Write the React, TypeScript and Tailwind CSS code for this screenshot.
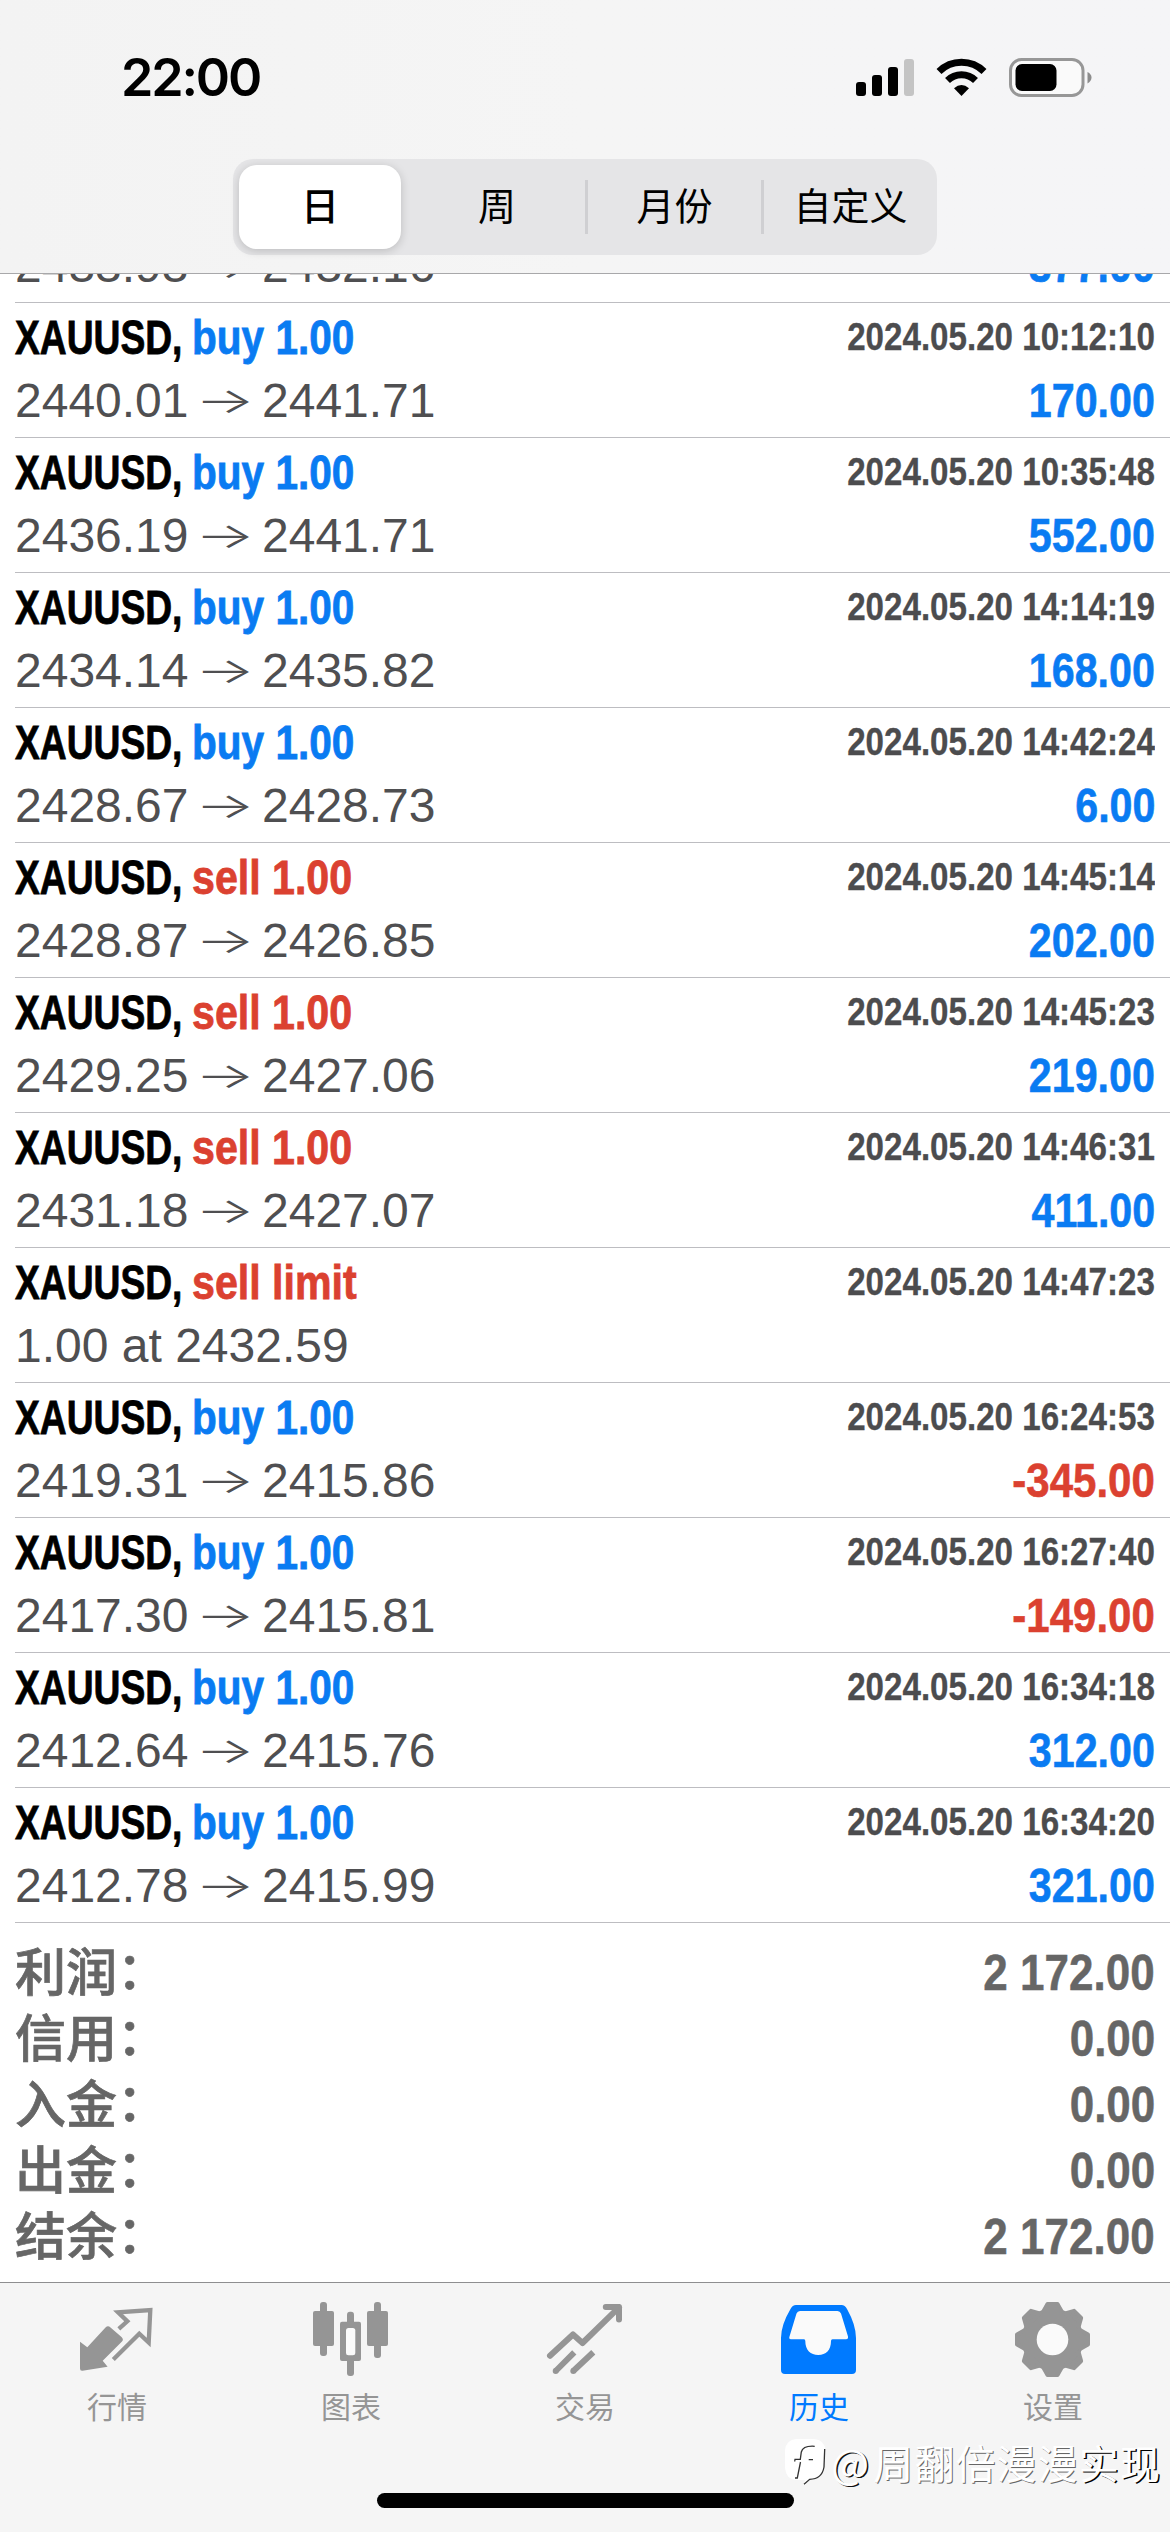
import type { ReactNode } from 'react';
import clsx from 'clsx';

type Side = 'buy' | 'sell';

interface Deal {
  side: Side;
  action: string;
  time: string;
  open?: string;
  close?: string;
  note?: string;
  profit?: string;
}

const DEALS: Deal[] = [
  { side: 'buy', action: 'buy 1.00', time: '2024.05.20 10:12:10', open: '2440.01', close: '2441.71', profit: '170.00' },
  { side: 'buy', action: 'buy 1.00', time: '2024.05.20 10:35:48', open: '2436.19', close: '2441.71', profit: '552.00' },
  { side: 'buy', action: 'buy 1.00', time: '2024.05.20 14:14:19', open: '2434.14', close: '2435.82', profit: '168.00' },
  { side: 'buy', action: 'buy 1.00', time: '2024.05.20 14:42:24', open: '2428.67', close: '2428.73', profit: '6.00' },
  { side: 'sell', action: 'sell 1.00', time: '2024.05.20 14:45:14', open: '2428.87', close: '2426.85', profit: '202.00' },
  { side: 'sell', action: 'sell 1.00', time: '2024.05.20 14:45:23', open: '2429.25', close: '2427.06', profit: '219.00' },
  { side: 'sell', action: 'sell 1.00', time: '2024.05.20 14:46:31', open: '2431.18', close: '2427.07', profit: '411.00' },
  { side: 'sell', action: 'sell limit', time: '2024.05.20 14:47:23', note: '1.00 at 2432.59' },
  { side: 'buy', action: 'buy 1.00', time: '2024.05.20 16:24:53', open: '2419.31', close: '2415.86', profit: '-345.00' },
  { side: 'buy', action: 'buy 1.00', time: '2024.05.20 16:27:40', open: '2417.30', close: '2415.81', profit: '-149.00' },
  { side: 'buy', action: 'buy 1.00', time: '2024.05.20 16:34:18', open: '2412.64', close: '2415.76', profit: '312.00' },
  { side: 'buy', action: 'buy 1.00', time: '2024.05.20 16:34:20', open: '2412.78', close: '2415.99', profit: '321.00' },
];

const SUMMARY = [
  { label: '利润', value: '2 172.00' },
  { label: '信用', value: '0.00' },
  { label: '入金', value: '0.00' },
  { label: '出金', value: '0.00' },
  { label: '结余', value: '2 172.00' },
];

const PERIODS = ['日', '周', '月份', '自定义'];

function QuotesIcon() {
  return (
    <svg viewBox="0 0 80 80" className="size-20">
      <path
        d="M3 41.7 10.3 47.3 28.500 27.5Q31 25 33.500 27.500L44.500 37Q47 39.500 45 41.500L25.700 60.700 30.600 66.700 5.500 70.700Q3 71 3 68.500Z"
        fill="currentColor"
      />
      <path
        d="M41.800 28.800 50.300 21.300 41 12.300 73.300 10 71.700 42.500 62.300 33.700 36.300 59.500"
        fill="none"
        stroke="currentColor"
        strokeWidth="4.300"
      />
    </svg>
  );
}

function ChartIcon() {
  return (
    <svg viewBox="0 0 80 80" className="size-20" fill="currentColor">
      <rect x="9" y="2" width="7" height="54" rx="3" />
      <rect x="2" y="11" width="21" height="35" rx="2" />
      <rect x="63" y="2" width="7" height="56" rx="3" />
      <rect x="56" y="11" width="21" height="35" rx="2" />
      <rect x="36" y="11.700" width="7" height="64.300" rx="3" />
      <rect x="29" y="21.700" width="21" height="39.300" rx="2" />
      <rect x="35" y="28" width="9.300" height="27.300" rx="2.500" fill="#fafafa" />
    </svg>
  );
}

function TradeIcon() {
  return (
    <svg viewBox="0 0 80 80" className="size-20" fill="none" stroke="currentColor" strokeWidth="6">
      <path d="M5 55.700 28 34.500 37.500 43 74 7.300M60.800 7H74V19.500" strokeLinecap="round" strokeLinejoin="round" />
      <path d="M10.700 71 29.300 52.300M28.300 71 48.300 52.300" />
      <g fill="currentColor" stroke="none">
        <circle cx="10.700" cy="71" r="3" />
        <circle cx="28.300" cy="71" r="3" />
      </g>
    </svg>
  );
}

function HistoryIcon() {
  return (
    <svg viewBox="0 0 80 80" className="size-20">
      <path
        d="M17 5H62.500Q66 5 68 9Q77 25 77 38V70Q77 74 73 74H6Q2 74 2 70V38Q2 25 11.500 9Q13.500 5 17 5Z"
        fill="currentColor"
      />
      <path
        d="M21 11H58.500Q61 11 62 13.500L69 36.500Q69.500 39.300 67 39.300H53.500Q52 39.300 52 41C52 50 47 55 39.300 55S26.300 50 26.300 41Q26.300 39.300 25 39.300H12Q9.500 39.300 10.500 36.500L17.500 13.500Q18.500 11 21 11Z"
        fill="#fafafa"
      />
    </svg>
  );
}

function SettingsIcon() {
  const teeth = [0, 45, 90, 135, 180, 225, 270, 315];
  return (
    <svg viewBox="0 0 80 80" className="size-20" fill="currentColor">
      <circle cx="39.500" cy="39.500" r="31" />
      {teeth.map((deg) => (
        <path
          key={deg}
          d="M30 12 34.500 4H44.500L49 12Z"
          stroke="currentColor"
          strokeWidth="4"
          strokeLinejoin="round"
          transform={`rotate(${deg} 39.500 39.500)`}
        />
      ))}
      <circle cx="39.500" cy="39.500" r="15.800" fill="#fafafa" />
    </svg>
  );
}

const TABS: { label: string; icon: ReactNode; active?: boolean }[] = [
  { label: '行情', icon: <QuotesIcon /> },
  { label: '图表', icon: <ChartIcon /> },
  { label: '交易', icon: <TradeIcon /> },
  { label: '历史', icon: <HistoryIcon />, active: true },
  { label: '设置', icon: <SettingsIcon /> },
];

function StatusBar() {
  return (
    <div className="flex h-[159px] justify-between pl-[121px] pr-[78px] pt-[46px]">
      <span className="h-[64px] font-['Inter'] text-[52px] font-semibold leading-[64px] tracking-[-2.2px] text-black">
        22:00
      </span>
      <svg viewBox="0 0 236 40" className="mt-[12px] h-10 w-[236px]">
        <rect x="0" y="24" width="10" height="14" rx="3" />
        <rect x="16" y="17" width="10" height="21" rx="3" />
        <rect x="32" y="9" width="10" height="29" rx="3" />
        <rect x="48" y="1" width="10" height="37" rx="3" fill="#c4c4c4" />
        <g fill="none" stroke="#000" strokeWidth="7">
          <path d="M83 13.500A32 32 0 0 1 128 13.500" />
          <path d="M91.500 22.500A20 20 0 0 1 119.500 22.500" />
        </g>
        <path d="M105.500 38 98 30.300Q105.500 23.500 113 30.300Z" />
        <rect x="154.500" y="1.500" width="72.500" height="36" rx="11" fill="#fafafa" stroke="#979797" strokeWidth="3" />
        <rect x="159.500" y="6" width="41" height="27" rx="6.500" />
        <path d="M231.500 14Q235.500 16 235.500 19.500T231.500 25.500Z" fill="#8c8c8c" />
      </svg>
    </div>
  );
}

function PeriodSwitch() {
  return (
    <div className="mx-auto flex h-24 w-[704px] items-center rounded-[20px] bg-[#e5e5e7] text-[38px] text-black">
      {PERIODS.map((p, i) => (
        <div
          key={p}
          className={clsx(
            'flex items-center justify-center',
            i === 0 && 'ml-[6px] mr-2 h-[84px] w-[162px] rounded-[18px] bg-white font-medium shadow-[0_2px_10px_rgba(0,0,0,0.18)]',
            i === 1 && 'h-[54px] w-[176px]',
            i > 1 && 'h-[54px] w-[176px] border-l-[3px] border-[#cfcfd2]',
          )}
        >
          {p}
        </div>
      ))}
    </div>
  );
}

function PriceLine({ open, close, note, profit }: Pick<Deal, 'open' | 'close' | 'note' | 'profit'>) {
  const loss = profit?.startsWith('-');
  return (
    <div className="flex h-[64px] items-start justify-between text-[48px] leading-[64px]">
      {note ? (
        <span className="text-[#4f4f51]">{note}</span>
      ) : (
        <span className="flex text-[#4f4f51]">
          <span className="w-[180px]">{open}</span>
          <span className="w-[67px] origin-left scale-x-[1.75] font-['Inter'] text-[36px] font-light leading-[62px]">→</span>
          <span>{close}</span>
        </span>
      )}
      {profit && (
        <span
          className={clsx(
            'origin-right font-bold [-webkit-text-stroke:0.6px]',
            loss ? 'scale-x-[0.875] text-[#db4130]' : 'scale-x-[0.858] text-[#0a7bf2]',
          )}
        >
          {profit}
        </span>
      )}
    </div>
  );
}

function DealRow({ deal }: { deal: Deal }) {
  return (
    <li className="ml-[15px] h-[135px] border-b border-[#bdbdc1] pr-[15px] pt-1">
      <div className="flex h-[62px] items-start justify-between font-bold leading-[62px]">
        <div className="flex text-[48px] [-webkit-text-stroke:0.8px]">
          <span className="w-[177px] origin-left scale-x-[0.775] whitespace-nowrap text-black">XAUUSD,</span>
          <span
            className={clsx(
              'origin-left whitespace-nowrap',
              deal.side === 'buy' ? 'scale-x-[0.845] text-[#0a7bf2]' : 'scale-x-[0.857] text-[#db4130]',
            )}
          >
            {deal.action}
          </span>
        </div>
        <span className="origin-right scale-x-[0.872] text-[38px] leading-[60px] text-[#4c4c4e] [-webkit-text-stroke:0.3px]">
          {deal.time}
        </span>
      </div>
      <PriceLine open={deal.open} close={deal.close} note={deal.note} profit={deal.profit} />
    </li>
  );
}

function Watermark() {
  return (
    <div className="absolute bottom-[45px] right-[9px] flex items-center">
      <svg viewBox="0 0 46 50" className="mr-[2px] h-[50px] w-[46px]">
        <path
          d="M13 2H31Q42 3 42 13L41 30Q39 42 26.700 42.500L21 47.300 22 43H13Q3 42 2 31V13Q3 3 13 2Z"
          fill="#fff"
        />
        <path
          d="M31.700 9.300Q20 8.500 18.300 15L17.300 22.300H12L11.700 24.500M17.500 25 14.300 41H12M25.700 22.700H30M41.700 12 41 30Q39 42 26.700 42.300L21 47.300"
          fill="none"
          stroke="#333"
          strokeWidth="1.300"
        />
      </svg>
      <span className="flex font-['Noto_Sans_CJK_SC',sans-serif] text-[40px] leading-[50px] tracking-[1.1px] text-white">
        <span className="w-[42px] [text-shadow:1.5px_1px_0.5px_#111]">@</span>
        <span className="[text-shadow:1px_1px_0.5px_#666]">周翻倍漫漫</span>
        <span className="[text-shadow:1.5px_1px_0.5px_#000]">实现</span>
      </span>
    </div>
  );
}

export default function App() {
  return (
    <div className="relative flex h-[2532px] w-[1170px] flex-col overflow-hidden bg-white font-['Liberation_Sans','Noto_Sans_CJK_SC',sans-serif]">
      <header className="h-[274px] shrink-0 border-b border-[#a8a8aa] bg-linear-to-r from-[#f3f3f3] via-[#f5f5f5] to-[#f5f5f7]">
        <StatusBar />
        <PeriodSwitch />
      </header>

      <main className="h-[2008px] shrink-0">
        {/* tail of the row that is scrolled under the header */}
        <div className="ml-[15px] flex h-[29px] flex-col justify-end overflow-hidden border-b border-[#bdbdc1] pb-[4px] pr-[15px]">
          <PriceLine open="2433.93" close="2432.16" profit="377.00" />
        </div>
        <ul>
          {DEALS.map((deal) => (
            <DealRow key={deal.time} deal={deal} />
          ))}
        </ul>
        <dl className="px-[15px] pt-[17px] text-[#666]">
          {SUMMARY.map((s) => (
            <div key={s.label} className="flex h-[66px] justify-between font-bold leading-[66px]">
              <dt className="pt-px text-[51px] font-medium [-webkit-text-stroke:0.7px]">
                {s.label}
                <span className="relative -top-[2px]">：</span>
              </dt>
              <dd className="origin-right scale-x-[0.88] text-[50px] [-webkit-text-stroke:0.5px]">{s.value}</dd>
            </div>
          ))}
        </dl>
      </main>

      <nav className="flex h-[250px] shrink-0 flex-col items-center border-t border-[#8e8e90] bg-[#f5f5f5]">
        <div className="flex h-[210px] w-full pt-[17px]">
          {TABS.map((tab) => (
            <div
              key={tab.label}
              className={clsx('flex w-[234px] flex-col items-center', tab.active ? 'text-[#007aff]' : 'text-[#959595]')}
            >
              {tab.icon}
              <span className="mt-[8px] text-[30px] leading-[40px]">{tab.label}</span>
            </div>
          ))}
        </div>
        <div className="h-[15px] w-[417px] rounded-full bg-black" />
      </nav>
      <Watermark />
    </div>
  );
}
